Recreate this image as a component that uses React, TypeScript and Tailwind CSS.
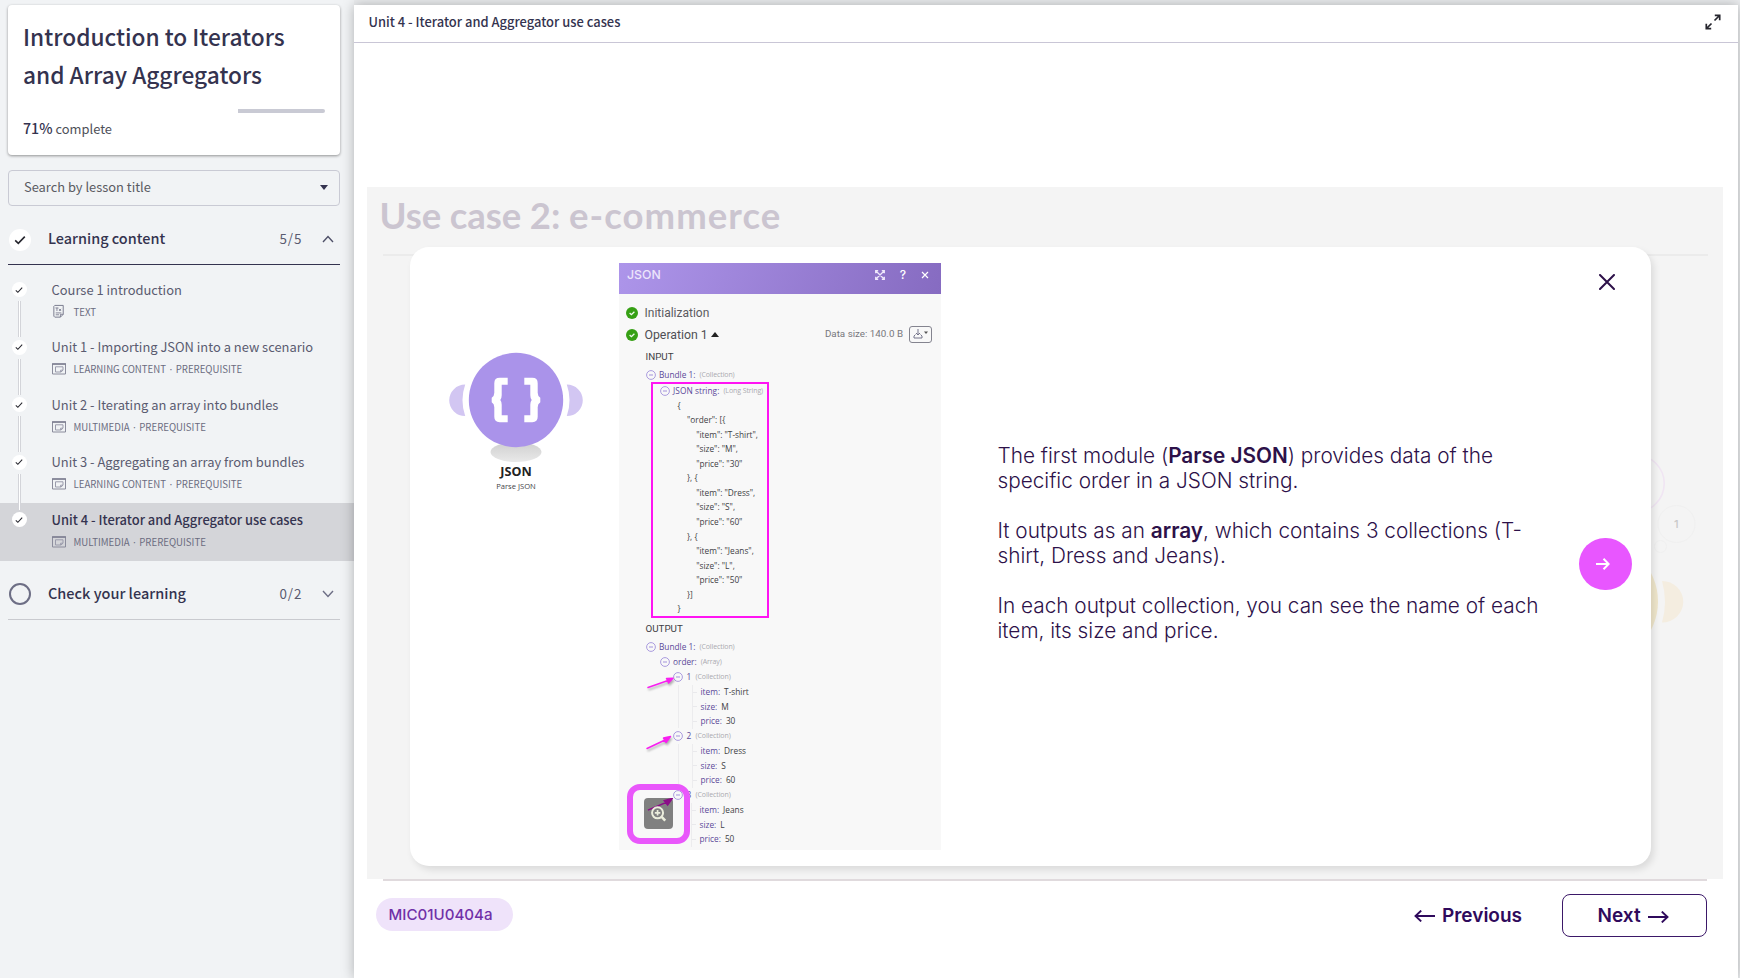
import React from "react";

/* ---------- sidebar ---------- */

function Tick({ className }: { className: string }) {
  return (
    <svg viewBox="0 0 12 12" className={className} fill="none" stroke="#26262e" strokeWidth="1.6">
      <path d="M1.2 6.4 4.3 9.4 10.8 2.6" />
    </svg>
  );
}

function TextIcon() {
  return (
    <svg viewBox="0 0 14 16" className="h-[15px] w-[14px]" fill="none" stroke="#74758a" strokeWidth="1">
      <path d="M2.5 1.5h9v9.5L8.5 14h-6l-1-1V2.5z" />
      <path d="M8.5 14v-3h3M3.5 11.5H7M3.5 9.5h6M3.2 4.2h3.2M4.8 4.2v3.3M7 5.2l2.2 2.2M9.2 5.2 7 7.4" strokeWidth="0.9" />
    </svg>
  );
}

function MediaIcon() {
  return (
    <svg viewBox="0 0 14 12" className="h-3 w-3.5" fill="none" stroke="#8b8c9c" strokeWidth="1">
      <path d="M.5 1h13v10H.5z" />
      <path d="M0 1h14" strokeWidth="1.5" stroke="#7d7e90" />
      <path d="M3.5 3.8h7.5v3.4L9 9H3.5zM8.6 9V7.2H11" stroke="#9a9bab" />
    </svg>
  );
}

type Lesson = { title: string; meta: string; text?: boolean; active?: boolean };

const lessons: Lesson[] = [
  { title: "Course 1 introduction", meta: "TEXT", text: true },
  { title: "Unit 1 - Importing JSON into a new scenario", meta: "LEARNING CONTENT · PREREQUISITE" },
  { title: "Unit 2 - Iterating an array into bundles", meta: "MULTIMEDIA · PREREQUISITE" },
  { title: "Unit 3 - Aggregating an array from bundles", meta: "LEARNING CONTENT · PREREQUISITE" },
  { title: "Unit 4 - Iterator and Aggregator use cases", meta: "MULTIMEDIA · PREREQUISITE", active: true },
];

function LessonRow({ lesson, last }: { lesson: Lesson; last: boolean }) {
  return (
    <li className={`flex h-[57.5px] ${lesson.active ? "bg-[#d4d5d9]" : ""}`}>
      <div className="flex w-[38px] shrink-0 flex-col items-center pt-[9px]">
        <span className="flex size-[15px] shrink-0 items-center justify-center rounded-full bg-white">
          <Tick className="size-2" />
        </span>
        {!last && <span className="relative mt-1 h-9 w-[3px] shrink-0 border-x border-[#d3d4d9] bg-white" />}
      </div>
      <div className="flex flex-col pl-[13.5px] pt-[6.5px]">
        <span
          className={`h-5 whitespace-nowrap text-[12.92px] leading-5 ${
            lesson.active ? "font-medium text-[#34334f]" : "text-[#5a5b70]"
          }`}
        >
          {lesson.title}
        </span>
        <span className="mt-1 flex h-4 items-center">
          <span className="flex w-[14px] justify-center">{lesson.text ? <TextIcon /> : <MediaIcon />}</span>
          <span className="ml-2 whitespace-nowrap text-[9.65px] leading-4 text-[#6b6c80]">{lesson.meta}</span>
        </span>
      </div>
    </li>
  );
}

function Sidebar() {
  return (
    <aside className="relative flex h-full w-[354px] shrink-0 flex-col bg-[#f1f3f5] pt-[5px] font-['Noto_Sans_CJK_JP','Noto_Sans',sans-serif]">
      <div className="ml-2 mr-[14px] flex h-[150px] shrink-0 flex-col rounded-[4px] bg-white px-[15px] pt-[13px] shadow-[0_1px_3px_rgba(0,0,0,0.4)]">
        <h1 className="whitespace-nowrap text-[22.7px] font-medium leading-[38px] text-[#34334f]">
          Introduction to Iterators
          <br />
          and Array Aggregators
        </h1>
        <div className="mt-[15px] flex h-1 justify-end">
          <span className="h-1 w-[87px] rounded-r-[2px] bg-[#c9cad4]" />
        </div>
        <p className="mt-[5px] flex items-baseline gap-[3px] leading-5 text-[#4e5058]">
          <span className="text-[14.2px] font-medium text-[#34334f]">71%</span>
          <span className="text-[12.9px]">complete</span>
        </p>
      </div>

      <div className="ml-2 mr-[14px] mt-[15px] flex h-9 shrink-0 items-center justify-between rounded-[4px] border border-[#c9cad4] pb-[2px] pl-[15px] pr-[11px]">
        <span className="text-[12.88px] leading-5 text-[#5a5b62]">Search by lesson title</span>
        <svg viewBox="0 0 8 5" className="mt-[1px] h-[5px] w-2" fill="#34334f">
          <path d="M0 0h8L4 5z" />
        </svg>
      </div>

      <div className="ml-2 mr-[14px] mt-[15px] flex h-11 shrink-0 items-center border-b border-[#34334f] pb-[7px]">
        <span className="ml-[1px] mt-[1px] flex size-[22px] items-center justify-center rounded-full bg-white">
          <Tick className="size-3" />
        </span>
        <span className="ml-[17px] grow pb-[2px] text-[14.45px] font-medium leading-5 text-[#34334f]">Learning content</span>
        <span className="w-[42px] pb-[2px] text-[13.4px] leading-5 tracking-[0.9px] text-[#5a5b70]">5/5</span>
        <svg viewBox="0 0 12 8" className="mr-[6.5px] h-2 w-3" fill="none" stroke="#4f5068" strokeWidth="1.4">
          <path d="m1 7 5-5.4L11 7" />
        </svg>
      </div>

      <ul className="flex flex-col pt-[8px]">
        {lessons.map((l, i) => (
          <LessonRow key={l.title} lesson={l} last={i === lessons.length - 1} />
        ))}
      </ul>

      <div className="ml-2 mr-[14px] flex h-[59.5px] shrink-0 items-center border-b border-[#c9cacf] pt-[8px]">
        <span className="ml-[1px] size-[22px] rounded-full border-2 border-[#6d6e85]" />
        <span className="ml-[17px] grow pb-[2px] text-[14.5px] font-medium leading-5 text-[#34334f]">Check your learning</span>
        <span className="w-[42px] pb-[2px] text-[13.4px] leading-5 tracking-[0.9px] text-[#5a5b70]">0/2</span>
        <svg viewBox="0 0 12 8" className="mr-[6.5px] h-2 w-3" fill="none" stroke="#6d6e85" strokeWidth="1.4">
          <path d="m1 1 5 5.4L11 1" />
        </svg>
      </div>
    </aside>
  );
}

/* ---------- JSON inspector panel ---------- */

function CheckDot() {
  return (
    <svg viewBox="0 0 12 12" className="size-3 shrink-0">
      <circle cx="6" cy="6" r="6" fill="#36a014" />
      <path d="m3.6 6 1.8 1.7 3-3" fill="none" stroke="#f2fbef" strokeWidth="1.3" />
    </svg>
  );
}

function Collapse() {
  return (
    <svg viewBox="0 0 10 10" className="size-[10px] shrink-0" fill="none" stroke="#a392dc">
      <circle cx="5" cy="5" r="4.4" strokeWidth="0.9" />
      <path d="M3 5h4" strokeWidth="1" />
    </svg>
  );
}

function Node({ label, kind, className, labelClass }: { label: string; kind: string; className: string; labelClass: string }) {
  return (
    <div className={`flex items-center whitespace-nowrap ${className}`}>
      <Collapse />
      <span className={`ml-[3.5px] text-[#5b4899] ${labelClass}`}>{label}</span>
      <span className="ml-1 text-[7px] tracking-[-0.1px] text-[#aaaab0]">{kind}</span>
    </div>
  );
}

const jsonLines: [string, string][] = [
  ["pl-[24.5px]", "{"],
  ["pl-[34px]", '"order": [{'],
  ["pl-[43.2px]", '"item": "T-shirt",'],
  ["pl-[43.2px]", '"size": "M",'],
  ["pl-[43.2px]", '"price": "30"'],
  ["pl-[34px]", "}, {"],
  ["pl-[43.2px]", '"item": "Dress",'],
  ["pl-[43.2px]", '"size": "S",'],
  ["pl-[43.2px]", '"price": "60"'],
  ["pl-[34px]", "}, {"],
  ["pl-[43.2px]", '"item": "Jeans",'],
  ["pl-[43.2px]", '"size": "L",'],
  ["pl-[43.2px]", '"price": "50"'],
  ["pl-[34px]", "}]"],
  ["pl-[24.5px]", "}"],
];

const outputs = [
  { n: "1", item: "T-shirt", size: "M", price: "30" },
  { n: "2", item: "Dress", size: "S", price: "60" },
  { n: "3", item: "Jeans", size: "L", price: "50" },
];

function Pointer({ d, className }: { d: string; className: string }) {
  return (
    <svg viewBox="0 0 30 16" className={`absolute h-4 w-[30px] drop-shadow-[1px_2px_1px_rgba(0,0,0,0.3)] ${className}`}>
      <path d={d} stroke="#f81ff0" strokeWidth="1.5" fill="#f81ff0" strokeLinejoin="round" />
    </svg>
  );
}

function JsonPanel() {
  return (
    <div className="relative flex h-[587px] w-[322px] shrink-0 flex-col bg-[#f8f8f8] font-['Open_Sans','Noto_Sans',sans-serif] text-[8.3px] leading-[14px] text-[#3f3f45]">
      <div className="flex h-[31px] shrink-0 items-center bg-linear-[110deg,#ad95ea,#866bc1] pb-[7px] pl-2 pr-[12px] text-white">
        <span className="grow font-['Inter',sans-serif] text-[12.3px] font-medium text-[#ece5fb]">JSON</span>
        <svg viewBox="0 0 10 10" className="size-[10px]" fill="none" stroke="#efe9fb" strokeWidth="1.3">
          <path d="M.7 3.2V.7h2.5M6.8.7h2.5v2.5M9.3 6.8v2.5H6.8M3.2 9.3H.7V6.8M1 1l8 8M9 1 1 9" />
        </svg>
        <span className="ml-[13px] w-[10px] text-center font-['Inter',sans-serif] text-[12px] font-medium">?</span>
        <svg viewBox="0 0 8 8" className="ml-[13px] size-2" fill="none" stroke="#fff" strokeWidth="1.2">
          <path d="m1 1 6 6M7 1 1 7" />
        </svg>
      </div>

      <div className="mt-[9px] flex h-5 shrink-0 items-center pl-[7px] font-['Roboto',sans-serif] text-[12px] text-[#5b5b60]">
        <CheckDot />
        <span className="ml-[6.5px] pb-[1px] text-[12px]">Initialization</span>
      </div>
      <div className="mt-[1.5px] flex h-[21px] shrink-0 items-center pl-[7px] pr-[9px] font-['Roboto',sans-serif] text-[#4f4f54]">
        <CheckDot />
        <span className="ml-[6.5px] pb-[1px] text-[12.3px]">Operation 1</span>
        <svg viewBox="0 0 8 5" className="ml-[3px] h-[5px] w-2 -translate-y-px" fill="#222">
          <path d="M0 5h8L4 0z" />
        </svg>
        <span className="ml-auto pb-[2px] text-[9.8px] text-[#77777c]">Data size: 140.0 B</span>
        <span className="mb-[2px] ml-[6px] flex h-[17px] w-[23px] items-center justify-center rounded-[3px] border border-[#84848f]">
          <svg viewBox="0 0 16 10" className="h-[10px] w-4" fill="none" stroke="#74748a" strokeWidth="1">
            <path d="M5 0v6M3 4l2 2 2-2M2.5 5.5 1 7v2h8V7L7.5 5.5" />
            <path d="M11 2.5h4L13 5z" fill="#555" stroke="none" />
          </svg>
        </span>
      </div>
      <div className="mt-[4.5px] h-[14px] shrink-0 pl-[26.5px] font-['Roboto',sans-serif] text-[9.8px]">INPUT</div>
      <Node label="Bundle 1:" kind="(Collection)" className="mt-[4px] h-[14px] shrink-0 pl-[26.5px]" labelClass="" />

      <div className="ml-8 flex h-[236px] w-[118px] shrink-0 flex-col border-2 border-[#ff14f3]">
        <Node label="JSON string:" kind="(Long String)" className="h-[14px] shrink-0 pl-[6.5px]" labelClass="tracking-[0.05px]" />
        <div className="flex flex-col pt-[0.5px]">
          {jsonLines.map(([pad, line], i) => (
            <span key={i} className={`h-[14.57px] whitespace-pre leading-[14.57px] ${pad}`}>
              {line}
            </span>
          ))}
        </div>
      </div>

      <div className="mt-[4px] h-[14px] shrink-0 pl-[26.5px] font-['Roboto',sans-serif] text-[9.8px]">OUTPUT</div>
      <Node label="Bundle 1:" kind="(Collection)" className="mt-1 h-[14px] shrink-0 pl-[26.5px]" labelClass="" />
      <Node label="order:" kind="(Array)" className="mt-[1px] h-[14px] shrink-0 pl-[40.5px]" labelClass="" />
      {outputs.map((o) => (
        <div key={o.n} className="flex h-[59px] shrink-0 flex-col">
          <Node label={o.n} kind="(Collection)" className="h-[16.5px] pl-[54px]" labelClass="w-[5px]" />
          <div
            className={`ml-[58.5px] flex h-[43px] flex-col pl-[13px] ${
              o.n === "3" ? "" : "border-l border-[#ececee]"
            }`}
          >
            {[
              ["item:", o.item],
              ["size:", o.size],
              ["price:", o.price],
            ].map(([k, v]) => (
              <div key={k} className="flex h-[14.6px] shrink-0 items-center border-l border-[#ececee]">
                <span className="h-px w-1 bg-[#e9e9ec]" />
                <span className="ml-[4px] text-[#5b4899]">{k}</span>
                <span className="ml-[4px]">{v}</span>
              </div>
            ))}
          </div>
        </div>
      ))}

      <Pointer d="M2 12.5 22 5.5 20.5 3.5 27 3.2 22.5 8 22 5.5z" className="left-[27px] top-[412px]" />
      <Pointer d="M2 14.5 20 6 18.5 4 25.5 2.5 21 8.5 20 6z" className="left-[26px] top-[471px]" />
      <div className="absolute left-[8px] top-[521px] h-[60px] w-[62.5px] rounded-[13px] border-[6px] border-[#e957fb]" />
      <div className="absolute left-[24.5px] top-[535px] flex h-[31px] w-[29.5px] items-center justify-center rounded-[4px] bg-[#808080]">
        <svg viewBox="0 0 30 31" className="h-full w-full" fill="none">
          <path d="M4 12 22 4.5 20.5 2.5 29 0 24 7 22 4.5z" fill="#8b0d88" stroke="#8b0d88" strokeWidth="1.4" />
          <g stroke="#eceedd">
            <circle cx="13.8" cy="14.8" r="5.6" strokeWidth="2" />
            <path d="m18 19 3.6 3.8" strokeWidth="2.6" />
            <path d="M13.8 12v5.6M11 14.8h5.6" strokeWidth="1.7" />
          </g>
        </svg>
      </div>
    </div>
  );
}

const brace =
  "M59.7 29.8h-8q-5.4 0-5.4 5.4v9.6q0 3.4-2.6 4.900v4.600q2.600 1.500 2.600 4.900v9.600q0 5.400 5.400 5.400h8v-7h-6v-10.500q0-3-1.400-4.700 1.400-1.700 1.400-4.700V36.800h6z";

function JsonModule() {
  return (
    <div className="flex w-[136px] flex-col items-center">
      <svg viewBox="0 0 136 116" className="h-[116px] w-[136px]">
        <defs>
          <linearGradient id="ground" x1="0" y1="0" x2="0" y2="1">
            <stop offset="0" stopColor="#cfcfcf" />
            <stop offset="1" stopColor="#e9e9e9" />
          </linearGradient>
        </defs>
        <ellipse cx="68" cy="104" rx="25.5" ry="10" fill="url(#ground)" />
        <path d="M17.2 36.5a16 15.800 0 0 0 0 31.600 48 48 0 0 1 0-31.600z" fill="#d2c6f2" />
        <path d="M118.800 36.500a16 15.800 0 0 1 0 31.600 48 48 0 0 0 0-31.600z" fill="#d2c6f2" />
        <circle cx="68" cy="52" r="47.2" fill="#aa93ea" />
        <g fill="#fff">
          <path d={brace} />
          <path d={brace} transform="translate(136 0) scale(-1 1)" />
        </g>
      </svg>
      <span className="font-['Noto_Sans',sans-serif] text-[12.6px] font-bold leading-4 text-[#222]">JSON</span>
      <span className="font-['Open_Sans',sans-serif] text-[7.6px] leading-3 text-[#45454a]">Parse JSON</span>
    </div>
  );
}

/* ---------- stage ---------- */

function Backdrop() {
  return (
    <svg viewBox="0 0 72 180" className="absolute left-[1284px] top-[263px] h-[180px] w-[72px]" fill="none">
      <circle cx="-15.4" cy="33.5" r="28.6" stroke="#f0e5f3" strokeWidth="1.6" />
      <circle cx="25.5" cy="74" r="18.5" stroke="#f0f0f0" />
      <circle cx="9.5" cy="96.5" r="6" stroke="#f0f0f0" />
      <text x="23" y="77.5" fontSize="11" fontFamily="Inter" fontWeight="500" fill="#c8c8c8">
        1
      </text>
      <circle cx="-54.5" cy="151.5" r="61.5" fill="#efe6cb" />
      <path d="M11 131a21 20.5 0 0 1 0 41.5q6-20.5 0-41.5z" fill="#f4ede0" />
    </svg>
  );
}

function Stage() {
  return (
    <section className="relative ml-[13px] mt-[144px] flex h-[692px] w-[1356px] shrink-0 flex-col bg-[#f4f4f4]">
      <h2 className="h-[67px] pl-[12.5px] pt-[4.5px] font-['Lato',sans-serif] text-[36.5px] font-bold leading-[46px] text-[#cbc5d0]">
        <span className="tracking-[-0.1px]">Use case 2: </span>
        <span className="tracking-[1.05px]">e-commerce</span>
      </h2>
      <div className="mx-[15.5px] h-[1.5px] bg-[#ebebeb]" />
      <Backdrop />
      <div className="absolute left-[43px] top-[60px] flex h-[619px] w-[1241px] rounded-[19px] bg-white shadow-[3px_4px_7px_rgba(0,0,0,0.1)]">
        <div className="pl-[38px] pt-[101px]">
          <JsonModule />
        </div>
        <div className="pl-[35px] pt-[16px]">
          <JsonPanel />
        </div>
        <div className="ml-[56.5px] flex w-[560px] flex-col gap-[25px] whitespace-nowrap pt-[196px] font-['Inter',sans-serif] text-[20.77px] font-light leading-[25px] text-[#2d1149]">
          <p>
            The first module (<b className="font-semibold">Parse JSON</b>) provides data of the
            <br />
            specific order in a JSON string.
          </p>
          <p>
            It outputs as an <b className="font-semibold">array</b>, which contains 3 collections (T-
            <br />
            shirt, Dress and Jeans).
          </p>
          <p>
            In each output collection, you can see the name of each
            <br />
            item, its size and price.
          </p>
        </div>
        <div className="ml-auto flex w-[72px] flex-col items-start">
          <svg viewBox="0 0 16 16" className="ml-[20px] mt-[27px] size-4" fill="none" stroke="#2d1149" strokeWidth="2" strokeLinecap="round">
            <path d="m1 1 14 14M15 1 1 15" />
          </svg>
          <span className="mt-[247.5px] flex size-[52.5px] items-center justify-center rounded-full bg-[#e856ff]">
            <svg viewBox="0 0 14 12" className="-ml-[4px] h-3 w-3.5" fill="none" stroke="#fff" strokeWidth="2">
              <path d="M0 6h12.5M7.5.8l5.2 5.2-5.2 5.2" />
            </svg>
          </span>
        </div>
      </div>
    </section>
  );
}

function Footer() {
  return (
    <footer className="ml-[28.5px] flex h-[60px] w-[1324.5px] shrink-0 items-start border-t-2 border-[#e0dadd] pt-[13px] font-['Inter',sans-serif]">
      <span className="-ml-[7px] mt-[4px] flex h-[32.5px] w-[137.5px] items-center rounded-full bg-[#efe3fa] pl-[13px] pt-[3px] text-[15.1px] font-medium text-[#7030a8]">
        MIC01U0404a
      </span>
      <span className="ml-auto flex h-[43px] items-center gap-[6.5px] pt-[2px] text-[19px] font-semibold text-[#2f0a5c]">
        <svg viewBox="0 0 21 12" className="-mt-[2px] h-3 w-[21px]" fill="none" stroke="currentColor" strokeWidth="1.9">
          <path d="M21 6H1.5M7.2.6 1.5 6l5.7 5.4" />
        </svg>
        Previous
      </span>
      <span className="ml-[40px] flex h-[43px] w-[145px] items-center gap-[7px] rounded-[8px] border-[1.5px] border-[#3b1868] pl-[34.5px] pt-[2px] text-[19px] font-semibold text-[#2f0a5c]">
        Next
        <svg viewBox="0 0 21 12" className="h-3 w-[21px]" fill="none" stroke="currentColor" strokeWidth="1.9">
          <path d="M0 6h19.5M13.8.6l5.7 5.4-5.7 5.4" />
        </svg>
      </span>
    </footer>
  );
}

export default function App() {
  return (
    <div className="flex h-[978px] w-[1740px] overflow-hidden bg-[#eceef0]">
      <Sidebar />
      <main className="relative mt-[5px] flex h-[973px] w-[1384px] shrink-0 flex-col bg-white shadow-[0_0_12px_rgba(0,0,0,0.28)]">
        <header className="flex h-[38px] shrink-0 items-center justify-between border-b border-[#c9c6d6] pb-[3px] pl-[14.5px] pr-[17px]">
          <span className="font-['Noto_Sans_CJK_JP','Noto_Sans',sans-serif] text-[12.93px] font-medium leading-5 text-[#34334f]">
            Unit 4 - Iterator and Aggregator use cases
          </span>
          <svg viewBox="0 0 16 16" className="size-4" fill="none" stroke="#26262e" strokeWidth="1.7">
            <path d="M9.5 6.5 14.5 1.5M9.8 1.3h4.9v4.9M6.5 9.5l-5 5M6.2 14.7H1.3V9.8" />
          </svg>
        </header>
        <Stage />
        <Footer />
      </main>
    </div>
  );
}
